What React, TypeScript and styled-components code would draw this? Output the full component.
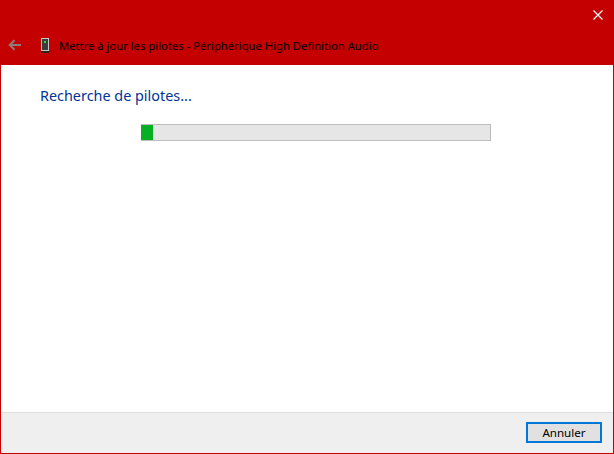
import React from "react";
import styled, { createGlobalStyle } from "styled-components";

const Global = createGlobalStyle`
  html, body { margin: 0; padding: 0; background: #fff; }
  body { font-family: "Noto Sans", "Open Sans", sans-serif; }
`;

const Window = styled.div`
  width: 614px;
  height: 454px;
  box-sizing: border-box;
  border: 1px solid #c40000;
  border-top: none;
  display: flex;
  flex-direction: column;
  background: #fff;
  overflow: hidden;
`;

const TitleBar = styled.header`
  height: 65px;
  flex: none;
  background: #c40000;
  display: flex;
  flex-direction: column;
`;

const CloseRow = styled.div`
  height: 31px;
  display: flex;
  justify-content: flex-end;
  align-items: flex-start;
  padding: 10px 10px 0 0;
  box-sizing: border-box;
`;

const NavRow = styled.div`
  display: flex;
  align-items: center;
  height: 30px;
  padding-left: 7px;
`;

const ArrowIcon = styled.svg`
  margin-bottom: 2px;
  flex: none;
`;

const DeviceIcon = styled.svg`
  margin-left: 19px;
  margin-right: 8px;
  margin-top: -1px;
  flex: none;
`;

const Title = styled.span`
  font-size: 11.25px;
  color: #000;
  white-space: nowrap;
  line-height: 16px;
`;

const Content = styled.main`
  flex: 1;
  padding: 21px 0 0 39px;
  display: flex;
  flex-direction: column;
`;

const Heading = styled.h1`
  margin: 0;
  font-size: 14.4px;
  font-weight: 400;
  line-height: 20px;
  color: #003399;
`;

const Progress = styled.div`
  margin: 18px 0 0 101px;
  width: 350px;
  height: 17px;
  box-sizing: border-box;
  border: 1px solid #bcbcbc;
  border-left: none;
  background: #e6e6e6;
  display: flex;
`;

const ProgressFill = styled.div<{ $width: number }>`
  width: ${(p) => p.$width}px;
  background: #06b025;
`;

const Footer = styled.footer`
  height: 41px;
  flex: none;
  box-sizing: border-box;
  background: #efefef;
  border-top: 1px solid #dfdfdf;
  display: flex;
  justify-content: flex-end;
  align-items: flex-start;
  padding: 9px 11px 0 0;
`;

const Button = styled.button`
  width: 76px;
  height: 21px;
  box-sizing: border-box;
  border: 2px solid #0078d7;
  background: #e1e1e1;
  color: #000;
  font-family: "Noto Sans", "Open Sans", sans-serif;
  font-size: 11.6px;
  line-height: 15px;
  padding: 0;
`;

export default function App() {
  return (
    <>
      <Global />
      <Window>
        <TitleBar>
          <CloseRow>
            <svg width="10" height="10" viewBox="0 0 10 10" aria-hidden="true">
              <path d="M.5.5l9 9M9.5.5l-9 9" stroke="#fff" strokeWidth="1.2" fill="none" />
            </svg>
          </CloseRow>
          <NavRow>
            <ArrowIcon width="14" height="12" viewBox="0 0 14 12" aria-hidden="true">
              <path d="M13 6H2M6.5 1.2L1.7 6l4.8 4.8" stroke="#8f7a7a" strokeWidth="2" fill="none" />
            </ArrowIcon>
            <DeviceIcon width="10" height="15" viewBox="0 0 10 15" aria-hidden="true">
              <rect x="0.5" y="0.5" width="7" height="12" fill="#3c3c3c" stroke="#c8c8c8" />
              <rect x="3" y="3" width="2" height="2" fill="#22e02a" />
              <rect x="0" y="13" width="8" height="2" fill="#302020" />
            </DeviceIcon>
            <Title>Mettre à jour les pilotes - Périphérique High Definition Audio</Title>
          </NavRow>
        </TitleBar>
        <Content>
          <Heading>Recherche de pilotes...</Heading>
          <Progress>
            <ProgressFill $width={12} />
          </Progress>
        </Content>
        <Footer>
          <Button>Annuler</Button>
        </Footer>
      </Window>
    </>
  );
}
